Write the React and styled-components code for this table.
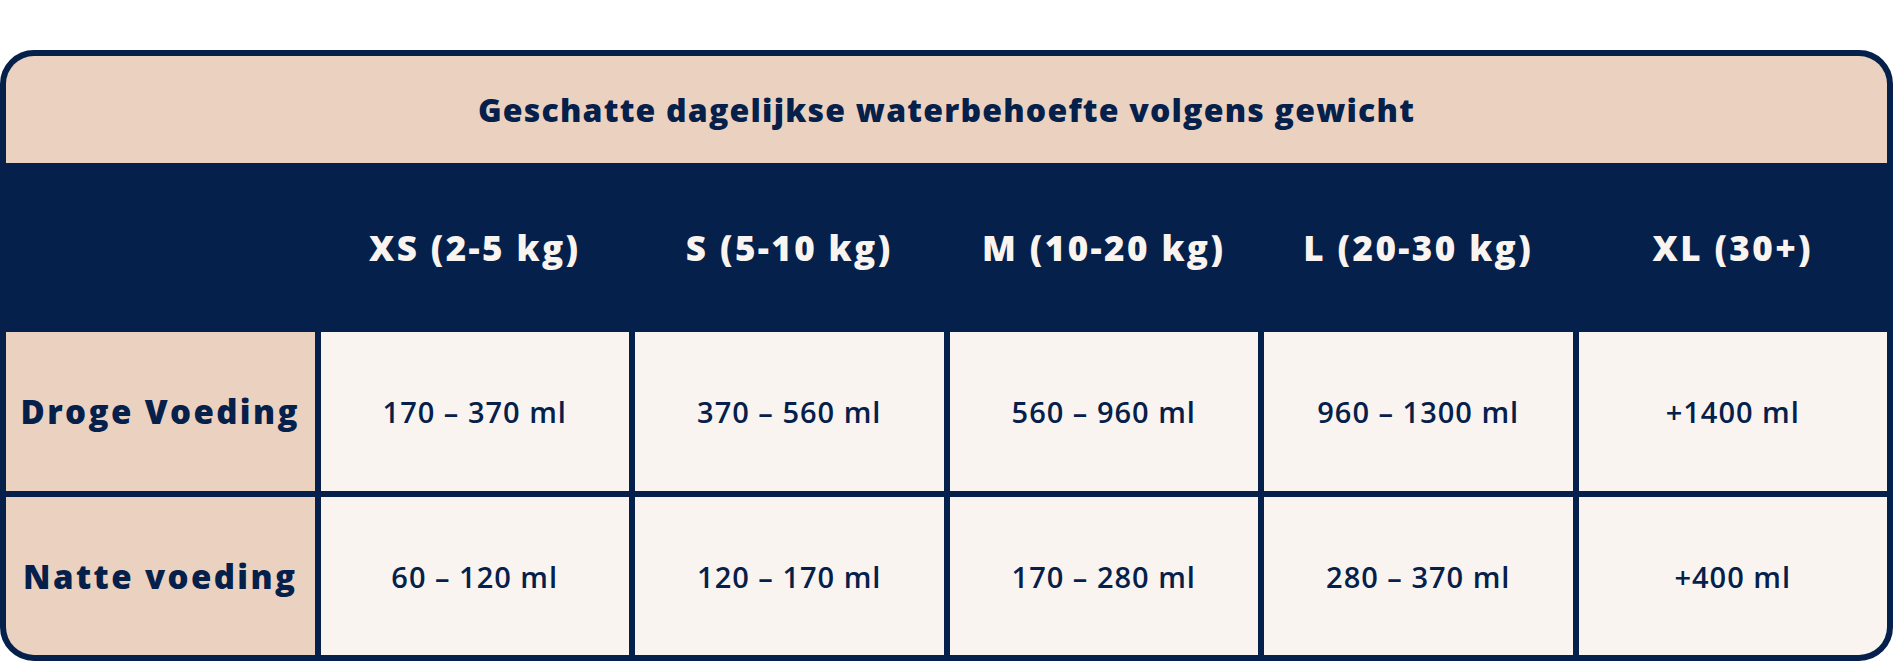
import React from "react";
import styled, { createGlobalStyle } from "styled-components";

const navy = "#05204a";
const peach = "#ebd2c0";
const cream = "#f9f4f0";

const sizes = ["XS (2-5 kg)", "S (5-10 kg)", "M (10-20 kg)", "L (20-30 kg)", "XL (30+)"];

const rows = [
  {
    label: "Droge Voeding",
    values: ["170 – 370 ml", "370 – 560 ml", "560 – 960 ml", "960 – 1300 ml", "+1400 ml"],
  },
  {
    label: "Natte voeding",
    values: ["60 – 120 ml", "120 – 170 ml", "170 – 280 ml", "280 – 370 ml", "+400 ml"],
  },
];

const GlobalStyle = createGlobalStyle`
  * {
    box-sizing: border-box;
  }
  body {
    margin: 0;
    background: #ffffff;
    font-family: "Open Sans", "Noto Sans", sans-serif;
  }
`;

const Page = styled.div`
  padding-top: 50px;
  width: 1893px;
`;

const Table = styled.div`
  border: 6px solid ${navy};
  border-radius: 34px;
  overflow: hidden;
  background: ${navy};
`;

const Title = styled.div`
  height: 107px;
  background: ${peach};
  color: ${navy};
  display: flex;
  align-items: center;
  justify-content: center;
  font-size: 32px;
  font-weight: 800;
  letter-spacing: 1.2px;
`;

const Grid = styled.div`
  display: grid;
  grid-template-columns: repeat(6, 1fr);
  grid-template-rows: 163px 159px 158px;
  gap: 6px;
`;

const HeadCell = styled.div`
  background: ${navy};
  color: ${cream};
  display: flex;
  align-items: center;
  justify-content: center;
  font-size: 35px;
  font-weight: 800;
  letter-spacing: 2.4px;
  padding-top: 6px;
`;

const LabelCell = styled.div`
  background: ${peach};
  color: ${navy};
  display: flex;
  align-items: center;
  justify-content: center;
  font-size: 33px;
  font-weight: 800;
  letter-spacing: 2.4px;
`;

const ValueCell = styled.div`
  background: ${cream};
  color: ${navy};
  display: flex;
  align-items: center;
  justify-content: center;
  font-size: 29px;
  font-weight: 600;
  letter-spacing: 1px;
`;

export default function App() {
  return (
    <>
      <GlobalStyle />
      <Page>
        <Table>
          <Title>Geschatte dagelijkse waterbehoefte volgens gewicht</Title>
          <Grid>
            <HeadCell />
            {sizes.map((s) => (
              <HeadCell key={s}>{s}</HeadCell>
            ))}
            {rows.map((row) => (
              <React.Fragment key={row.label}>
                <LabelCell>{row.label}</LabelCell>
                {row.values.map((v, i) => (
                  <ValueCell key={i}>{v}</ValueCell>
                ))}
              </React.Fragment>
            ))}
          </Grid>
        </Table>
      </Page>
    </>
  );
}
